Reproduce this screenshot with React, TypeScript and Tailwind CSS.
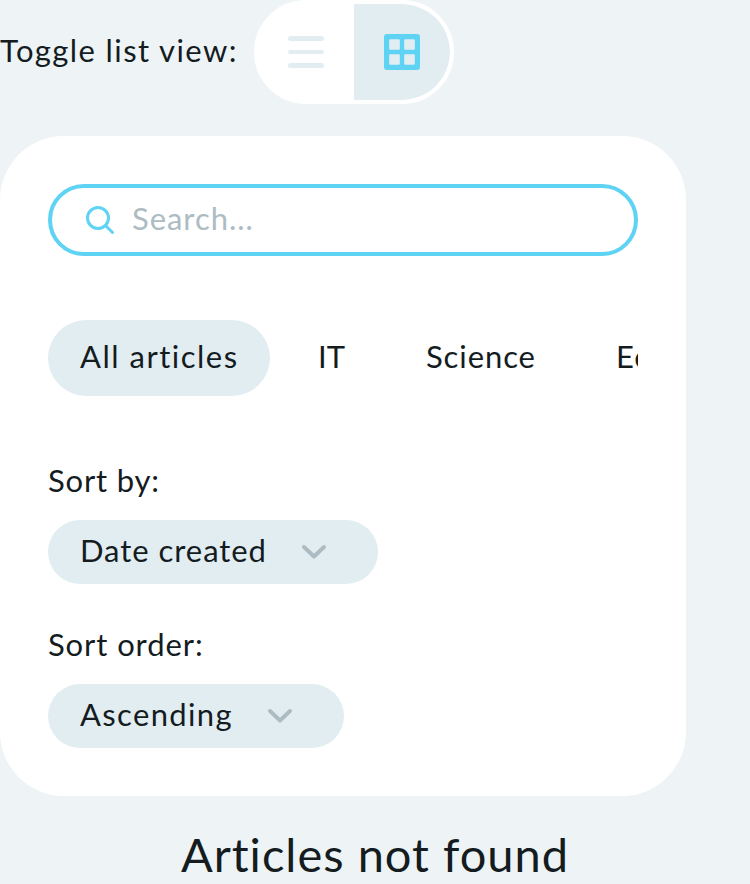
import type { ReactNode } from "react";

function Chevron() {
  return (
    <svg className="block h-4 w-[26px]" viewBox="0 0 26 16" fill="none">
      <path d="M3 3L13 12.5L23 3" stroke="#adbcc2" strokeWidth="4" strokeLinecap="round" strokeLinejoin="round" />
    </svg>
  );
}

function SelectField({ label, className, children }: { label: ReactNode; className: string; children: ReactNode }) {
  return (
    <div className="flex flex-col gap-4">
      <div className="flex h-11 items-center pb-[5px]">{label}</div>
      <button className={`flex h-16 items-center justify-between rounded-full bg-[#e2edf2] pr-[51px] pl-8 ${className}`}>
        {children}
        <Chevron />
      </button>
    </div>
  );
}

export default function App() {
  return (
    <div className="h-[884px] w-[750px] overflow-hidden bg-[#eef4f6] font-[Lato,sans-serif] text-[31px] leading-[44px] whitespace-nowrap text-[#141c1f]">
      <div className="flex h-[104px] items-center">
        <span className="w-[254px] pb-[5px] tracking-[1.4px]">Toggle list view:</span>
        <div className="flex h-[104px] w-[200px] overflow-hidden rounded-full border-4 border-white bg-white">
          <button className="flex w-24 items-center justify-center">
            <svg className="block h-9 w-9" viewBox="0 0 36 36">
              <rect y="2" width="36" height="5" rx="2.5" fill="#e2edf2" />
              <rect y="16" width="36" height="4" rx="2" fill="#e2edf2" />
              <rect y="29" width="36" height="5" rx="2.5" fill="#e2edf2" />
            </svg>
          </button>
          <button className="flex w-24 items-center justify-center rounded-r-full bg-[#e2edf2]">
            <svg className="block h-9 w-9" viewBox="0 0 36 36">
              <rect width="36" height="36" rx="3" fill="#5ed3f3" />
              <g fill="#e2edf2">
                <rect x="5.2" y="5.2" width="10.6" height="10.6" rx="1" />
                <rect x="20.2" y="5.2" width="10.6" height="10.6" rx="1" />
                <rect x="5.2" y="20.2" width="10.6" height="10.6" rx="1" />
                <rect x="20.2" y="20.2" width="10.6" height="10.6" rx="1" />
              </g>
            </svg>
          </button>
        </div>
      </div>

      <div className="mt-8 h-[660px] w-[686px] rounded-[64px] bg-white p-12">
        <div className="flex h-[72px] w-[590px] items-center gap-4 rounded-full border-4 border-[#5ed3f3] pl-8">
          <svg className="block h-8 w-8" viewBox="0 0 32 32" fill="none" stroke="#5ed3f3" strokeWidth="3" strokeLinecap="round">
            <circle cx="14" cy="14" r="10.5" />
            <path d="M22 22L28.5 28.5" />
          </svg>
          <span className="pb-[5px] tracking-[0.95px] text-[#adbcc2]">Search...</span>
        </div>

        <div className="mt-16 flex h-[76px] w-[590px] items-center overflow-hidden">
          <button className="h-[76px] w-[222px] shrink-0 rounded-full bg-[#e2edf2] pb-[5px] pl-8 text-left tracking-[1.5px]">All articles</button>
          <span className="w-[108px] shrink-0 pb-[5px] pl-12">IT</span>
          <span className="w-[190px] shrink-0 pb-[5px] pl-12 tracking-[0.9px]">Science</span>
          <span className="shrink-0 pb-[5px] pl-12 tracking-[1px]">Economics</span>
        </div>

        <div className="mt-16 flex flex-col items-start gap-10">
          <SelectField label={<span className="tracking-[0.8px]">Sort by:</span>} className="w-[330px]">
            <span className="pb-[5px] tracking-[0.95px]">Date created</span>
          </SelectField>
          <SelectField label={<span className="tracking-[0.9px]">Sort order:</span>} className="w-[296px]">
            <span className="pb-[5px] tracking-[1.35px]">Ascending</span>
          </SelectField>
        </div>
      </div>

      <div className="mt-[25px] text-center text-[47px] leading-[66px] tracking-[1px]">Articles not found</div>
    </div>
  );
}
